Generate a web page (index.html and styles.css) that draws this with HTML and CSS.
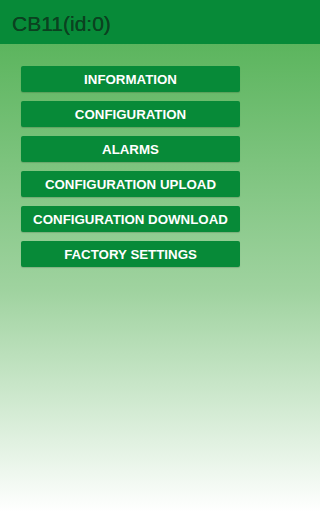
FILE: index.html
```html
<!DOCTYPE html>
<html>
<head>
<meta charset="utf-8">
<link rel="stylesheet" href="styles.css">
</head>
<body>
<div class="app">
  <header class="topbar"><h1 class="title">CB11(id:0)</h1></header>
  <main class="menu">
    <button class="btn">INFORMATION</button>
    <button class="btn">CONFIGURATION</button>
    <button class="btn">ALARMS</button>
    <button class="btn">CONFIGURATION UPLOAD</button>
    <button class="btn">CONFIGURATION DOWNLOAD</button>
    <button class="btn">FACTORY SETTINGS</button>
  </main>
</div>
</body>
</html>
```
FILE: styles.css
```css
html, body {
  margin: 0;
  padding: 0;
}
body {
  font-family: "Liberation Sans", Arial, sans-serif;
}
.app {
  height: 512px;
  display: flex;
  flex-direction: column;
  background: linear-gradient(to bottom, #5cb55e 44px, #a0d3a0 57%, #ffffff 100%);
}
.topbar {
  height: 44px;
  background: #078a38;
  display: flex;
  align-items: center;
  padding-left: 12px;
  box-sizing: border-box;
}
.title {
  margin: 0;
  font-size: 21px;
  font-weight: normal;
  color: #0b4220;
  line-height: 1;
  padding-top: 2px;
  text-shadow: 0 0 0.6px #0b4220;
}
.menu {
  width: 219px;
  display: flex;
  flex-direction: column;
  gap: 9px;
  padding: 22px 0 0 21px;
}
.btn {
  height: 26px;
  border: none;
  border-radius: 2px;
  background: #078a38;
  color: #ffffff;
  font-family: "Liberation Sans", Arial, sans-serif;
  font-weight: bold;
  font-size: 13.3px;
  padding: 0;
  box-shadow: 0 1px 1px rgba(0,0,0,0.15);
}
```
